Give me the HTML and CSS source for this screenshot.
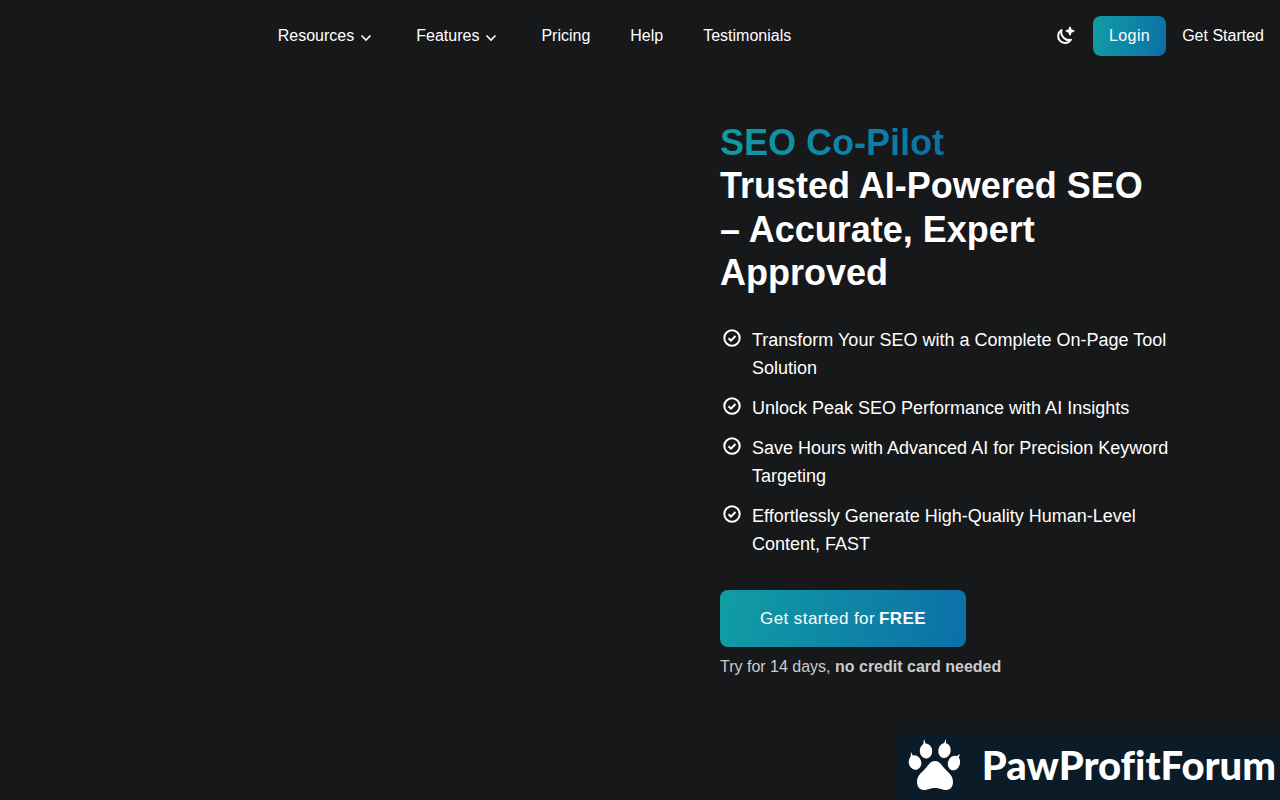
FILE: index.html
```html
<!DOCTYPE html>
<html lang="en">
<head>
    <meta charset="UTF-8">
    <meta name="viewport" content="width=device-width, initial-scale=1.0">
    <title>SEO Co-Pilot</title>
    <link rel="stylesheet" href="styles.css">
</head>
<body>
    <header class="navbar">
        <a href="#" class="logo" aria-label="Home"></a>
        <nav class="menu">
            <button type="button" class="menu-item">Resources
                <svg class="chevron" viewBox="0 0 20 20" aria-hidden="true"><path d="M5.5 7.500l4.5 4.5 4.5-4.5"/></svg>
            </button>
            <button type="button" class="menu-item">Features
                <svg class="chevron" viewBox="0 0 20 20" aria-hidden="true"><path d="M5.5 7.500l4.5 4.5 4.5-4.5"/></svg>
            </button>
            <a href="#" class="menu-item">Pricing</a>
            <a href="#" class="menu-item">Help</a>
            <a href="#" class="menu-item">Testimonials</a>
        </nav>
        <div class="actions">
            <button type="button" class="theme-btn" aria-label="Toggle theme">
                <svg viewBox="0 0 24 24" aria-hidden="true">
                    <path class="moon" d="M8.500 6A7 7 0 1 0 18 15.800C12.500 17.300 7 12 8.500 6Z"/>
                    <path class="star" d="M17 3.300L18 6L20.700 7L18 8L17 10.700L16 8L13.300 7L16 6Z"/>
                </svg>
            </button>
            <a href="#" class="btn login-btn">Login</a>
            <a href="#" class="menu-item">Get Started</a>
        </div>
    </header>

    <main class="hero">
        <div class="hero-media"></div>
        <div class="hero-content">
            <h1><span class="gradient-text">SEO Co-Pilot</span><br>Trusted AI-Powered SEO – Accurate, Expert Approved</h1>
            <ul class="benefits">
                <li>
                    <svg class="check" viewBox="0 0 24 24" aria-hidden="true"><circle cx="12" cy="12" r="7.700"/><path d="M8.500 12.200l2.500 2.400 4.500-4.600"/></svg>
                    <span>Transform Your SEO with a Complete On-Page Tool Solution</span>
                </li>
                <li>
                    <svg class="check" viewBox="0 0 24 24" aria-hidden="true"><circle cx="12" cy="12" r="7.700"/><path d="M8.500 12.200l2.500 2.400 4.500-4.600"/></svg>
                    <span>Unlock Peak SEO Performance with AI Insights</span>
                </li>
                <li>
                    <svg class="check" viewBox="0 0 24 24" aria-hidden="true"><circle cx="12" cy="12" r="7.700"/><path d="M8.500 12.200l2.500 2.400 4.500-4.600"/></svg>
                    <span>Save Hours with Advanced AI for Precision Keyword Targeting</span>
                </li>
                <li>
                    <svg class="check" viewBox="0 0 24 24" aria-hidden="true"><circle cx="12" cy="12" r="7.700"/><path d="M8.500 12.200l2.500 2.400 4.500-4.600"/></svg>
                    <span>Effortlessly Generate High-Quality Human-Level Content, FAST</span>
                </li>
            </ul>
            <a href="#" class="btn cta-btn">Get started for <strong>FREE</strong></a>
            <p class="note">Try for 14 days, <strong>no credit card needed</strong></p>
        </div>
    </main>

    <aside class="watermark">
        <svg class="paw" viewBox="0 0 52 52" aria-hidden="true">
            <path d="M27 22C32 22 34 27 38 31C41 34 45 37 45 43C45 48 42 51 38 51C34 51 32 49 27 49C22 49 20 51 16 51C12 51 9 48 9 43C9 37 13 34 16 31C20 27 22 22 27 22Z"/>
            <ellipse cx="7" cy="23.500" rx="6.200" ry="7.300" transform="rotate(-18 7 23.500)"/>
            <ellipse cx="18" cy="12" rx="6.200" ry="7.500" transform="rotate(-6 18 12)"/>
            <ellipse cx="36.500" cy="11.500" rx="6.200" ry="7.500" transform="rotate(8 36.500 11.500)"/>
            <ellipse cx="46" cy="24" rx="6" ry="7.500" transform="rotate(20 46 24)"/>
            <path d="M2.500 20L3 13L5.500 18ZM15 7L16 0L18 6ZM35 6L38 0L38 6ZM47 18L52 15L50 21Z"/>
        </svg>
        <span>PawProfitForum</span>
    </aside>
</body>
</html>
```
FILE: styles.css
```css
* {
    box-sizing: border-box;
}

body {
    margin: 0;
    background: #17181a;
    color: #fff;
    font-family: "Liberation Sans", Arial, sans-serif;
    font-size: 16px;
    line-height: 24px;
}

a {
    color: inherit;
    text-decoration: none;
}

button {
    padding: 0;
    border: none;
    background: none;
    color: inherit;
    font: inherit;
    cursor: pointer;
}

/* Navbar */
.navbar {
    display: flex;
    justify-content: space-between;
    align-items: center;
    height: 72px;
    padding: 0 16px;
}

.menu {
    display: flex;
    gap: 40px;
}

.menu-item {
    display: flex;
    align-items: center;
}

.chevron {
    width: 20px;
    height: 20px;
    margin: 4px 0 0 2px;
    fill: none;
    stroke: #fff;
    stroke-width: 1.6;
}

.actions {
    display: flex;
    align-items: center;
    gap: 16px;
}

.theme-btn,
.theme-btn svg {
    display: block;
    width: 24px;
    height: 24px;
}

.moon {
    fill: none;
    stroke: #fff;
    stroke-width: 2;
    stroke-linejoin: round;
}

.star {
    fill: #fff;
    stroke: #fff;
    stroke-width: 1.5;
    stroke-linejoin: round;
}

.btn {
    display: inline-flex;
    align-items: center;
    background: linear-gradient(100deg, #119da4, #0c6fa8);
    border-radius: 8px;
    letter-spacing: 0.025em;
}

.login-btn {
    height: 40px;
    padding: 0 16px;
}

/* Hero */
.hero {
    display: grid;
    grid-template-columns: 1fr 1fr;
    gap: 160px;
    align-items: center;
    min-height: calc(100vh - 72px);
    padding: 0 110px 72px;
}

h1 {
    margin: 0 0 32px;
    font-size: 36px;
    line-height: 1.2;
}

.gradient-text {
    background: linear-gradient(100deg, #119da4, #0c6fa8);
    -webkit-background-clip: text;
    background-clip: text;
    color: transparent;
}

.benefits {
    display: flex;
    flex-direction: column;
    gap: 12px;
    margin: 0 0 32px;
    padding: 0;
    list-style: none;
    font-size: 18px;
    line-height: 28px;
}

.benefits li {
    display: flex;
    gap: 8px;
}

.check {
    flex: none;
    width: 24px;
    height: 24px;
    fill: none;
    stroke: #fff;
    stroke-width: 2;
}

.cta-btn {
    gap: 4px;
    padding: 16px 40px;
    font-size: 17px;
    line-height: 25px;
}

.note {
    margin: 8px 0 0;
    color: #ccc;
}

/* Watermark over the page corner */
.watermark {
    position: fixed;
    right: 0;
    bottom: 0;
    display: flex;
    align-items: center;
    gap: 22px;
    height: 67px;
    padding: 0 4px 4px 10px;
    background: #0b1b28;
    font-family: Lato, sans-serif;
    font-size: 40px;
    font-weight: 900;
    font-variant-ligatures: none;
}

.paw {
    width: 52px;
    height: 52px;
    fill: #fff;
}
```
